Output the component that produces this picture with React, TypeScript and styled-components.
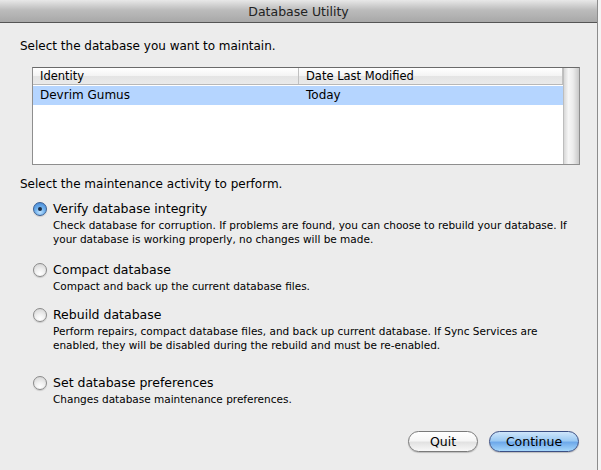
import styled, { createGlobalStyle } from 'styled-components'

const Global = createGlobalStyle`
    html, body {
        margin: 0;
        padding: 0;
        background: #f4f4f4;
    }
    * {
        box-sizing: border-box;
    }
`

const Window = styled.div`
    width: 598px;
    height: 470px;
    background: #ececec;
    border-right: 1px solid #8c8c8c;
    font-family: 'DejaVu Sans', 'Lucida Grande', sans-serif;
    color: #000;
    display: flex;
    flex-direction: column;
`
const TitleBar = styled.div`
    height: 23px;
    flex-shrink: 0;
    background: linear-gradient(#e8e8e8, #bcbcbc 45%, #a8a8a8);
    border-bottom: 1px solid #555;
    display: flex;
    justify-content: center;
    align-items: center;
    font-size: 12.5px;
    color: #222;
    padding-top: 1px;
`
const Body = styled.div`
    padding: 16px 18px 0 20px;
    display: flex;
    flex-direction: column;
`
const Prompt = styled.div<{ $gap: number }>`
    font-size: 12px;
    line-height: 15px;
    margin-bottom: ${(p) => p.$gap}px;
`
const Table = styled.div`
    margin-left: 12px;
    width: 548px;
    height: 98px;
    border: 1px solid #8e8e8e;
    border-top-color: #6a6a6a;
    background: #fff;
    display: flex;
    margin-bottom: 12px;
`
const Grid = styled.div`
    flex: 1;
    display: flex;
    flex-direction: column;
`
const HeaderRow = styled.div`
    height: 17px;
    display: grid;
    grid-template-columns: 266px 1fr;
    background: linear-gradient(#ffffff, #f3f3f3 50%, #e4e4e4 51%, #eaeaea);
    border-bottom: 1px solid #b8b8b8;
`
const HeaderCell = styled.div`
    font-size: 11.5px;
    line-height: 16px;
    padding-left: 7px;
    border-right: 1px solid #c0c0c0;
`
const Row = styled.div<{ $selected?: boolean }>`
    height: 19px;
    margin-top: 1px;
    display: grid;
    grid-template-columns: 266px 1fr;
    background: ${(p) => (p.$selected ? '#b5d5ff' : 'transparent')};
`
const Cell = styled.div`
    font-size: 12px;
    line-height: 19px;
    padding-left: 7px;
`
const Scroller = styled.div`
    width: 16px;
    background: linear-gradient(90deg, #d8d8d8, #f6f6f6 30%, #ececec 60%, #c8c8c8);
    border-left: 1px solid #bdbdbd;
`
const Options = styled.div`
    display: flex;
    flex-direction: column;
    padding-left: 13px;
`
const Option = styled.div<{ $gap: number }>`
    display: flex;
    gap: 6px;
    margin-bottom: ${(p) => p.$gap}px;
`
const Radio = styled.div<{ $on?: boolean }>`
    width: 14px;
    height: 14px;
    flex-shrink: 0;
    margin-top: 1px;
    border-radius: 50%;
    border: 1px solid ${(p) => (p.$on ? '#3a5f93' : '#8a8a8a')};
    background: ${(p) =>
        p.$on
            ? 'radial-gradient(circle at 50% 75%, #bfe2ff, #6fb0ec 45%, #3d7fd0)'
            : 'radial-gradient(circle at 50% 80%, #ffffff, #f0f0f0 40%, #cfcfcf)'};
    box-shadow: 0 1px 1px rgba(0, 0, 0, 0.15);
    display: flex;
    justify-content: center;
    align-items: center;
    &::after {
        content: '';
        display: ${(p) => (p.$on ? 'block' : 'none')};
        width: 4px;
        height: 4px;
        border-radius: 50%;
        background: #1a2c44;
    }
`
const OptionText = styled.div`
    display: flex;
    flex-direction: column;
`
const OptionTitle = styled.div`
    font-size: 12.5px;
    line-height: 16px;
`
const OptionDesc = styled.div`
    font-size: 10.5px;
    line-height: 14px;
    margin-top: 1px;
    width: 530px;
`
const Buttons = styled.div`
    display: flex;
    justify-content: flex-end;
    gap: 11px;
`
const Button = styled.div<{ $primary?: boolean }>`
    height: 21px;
    width: ${(p) => (p.$primary ? '90px' : '70px')};
    border-radius: 11px;
    border: 1px solid ${(p) => (p.$primary ? '#3b4f83' : '#7a7a7a')};
    background: ${(p) =>
        p.$primary
            ? 'linear-gradient(#cfe6fb, #9ccaf3 45%, #6ea9ea 55%, #a6d7fb)'
            : 'linear-gradient(#ffffff, #f6f6f6 45%, #e2e2e2 55%, #f8f8f8)'};
    box-shadow: 0 1px 1px rgba(0, 0, 0, 0.2);
    display: flex;
    justify-content: center;
    align-items: center;
    font-size: 12.5px;
`

const options = [
    {
        title: 'Verify database integrity',
        desc: 'Check database for corruption. If problems are found, you can choose to rebuild your database. If your database is working properly, no changes will be made.',
        on: true,
        gap: 16,
    },
    {
        title: 'Compact database',
        desc: 'Compact and back up the current database files.',
        gap: 14,
    },
    {
        title: 'Rebuild database',
        desc: 'Perform repairs, compact database files, and back up current database. If Sync Services are enabled, they will be disabled during the rebuild and must be re-enabled.',
        gap: 23,
    },
    {
        title: 'Set database preferences',
        desc: 'Changes database maintenance preferences.',
        gap: 25,
    },
]

function App() {
    return (
        <>
            <Global />
            <Window>
                <TitleBar>Database Utility</TitleBar>
                <Body>
                    <Prompt $gap={13}>Select the database you want to maintain.</Prompt>
                    <Table>
                        <Grid>
                            <HeaderRow>
                                <HeaderCell>Identity</HeaderCell>
                                <HeaderCell>Date Last Modified</HeaderCell>
                            </HeaderRow>
                            <Row $selected>
                                <Cell>Devrim Gumus</Cell>
                                <Cell>Today</Cell>
                            </Row>
                        </Grid>
                        <Scroller />
                    </Table>
                    <Prompt $gap={9}>Select the maintenance activity to perform.</Prompt>
                    <Options>
                        {options.map((o) => (
                            <Option key={o.title} $gap={o.gap}>
                                <Radio $on={o.on} />
                                <OptionText>
                                    <OptionTitle>{o.title}</OptionTitle>
                                    <OptionDesc>{o.desc}</OptionDesc>
                                </OptionText>
                            </Option>
                        ))}
                    </Options>
                    <Buttons>
                        <Button>Quit</Button>
                        <Button $primary>Continue</Button>
                    </Buttons>
                </Body>
            </Window>
        </>
    )
}
export default App
